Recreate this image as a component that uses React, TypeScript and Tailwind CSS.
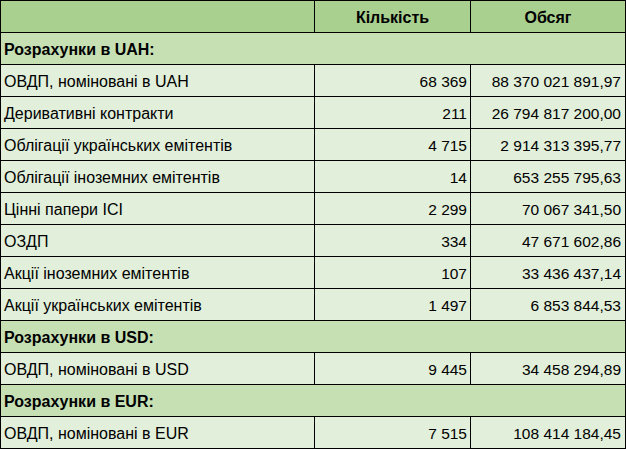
import React from "react";

type Row =
  | { kind: "section"; title: string }
  | { kind: "data"; name: string; count: string; volume: string };

const rows: Row[] = [
  { kind: "section", title: "Розрахунки в UAH:" },
  { kind: "data", name: "ОВДП, номіновані в UAH", count: "68 369", volume: "88 370 021 891,97" },
  { kind: "data", name: "Деривативні контракти", count: "211", volume: "26 794 817 200,00" },
  { kind: "data", name: "Облігації українських емітентів", count: "4 715", volume: "2 914 313 395,77" },
  { kind: "data", name: "Облігації іноземних емітентів", count: "14", volume: "653 255 795,63" },
  { kind: "data", name: "Цінні папери ІСІ", count: "2 299", volume: "70 067 341,50" },
  { kind: "data", name: "ОЗДП", count: "334", volume: "47 671 602,86" },
  { kind: "data", name: "Акції іноземних емітентів", count: "107", volume: "33 436 437,14" },
  { kind: "data", name: "Акції українських емітентів", count: "1 497", volume: "6 853 844,53" },
  { kind: "section", title: "Розрахунки в USD:" },
  { kind: "data", name: "ОВДП, номіновані в USD", count: "9 445", volume: "34 458 294,89" },
  { kind: "section", title: "Розрахунки в EUR:" },
  { kind: "data", name: "ОВДП, номіновані в EUR", count: "7 515", volume: "108 414 184,45" },
];

const cell = "h-[32px] border-r border-b border-black flex items-center pt-[2px] whitespace-nowrap";

export default function App() {
  return (
    <div className="w-[626px] text-[16px] text-black font-['Liberation_Sans',Arial,sans-serif]">
      <div className="grid grid-cols-[314px_156px_155px] border-l border-t border-black">
        {/* header */}
        <div className={`${cell} bg-[#a9d08e]`} />
        <div className={`${cell} bg-[#a9d08e] justify-center font-bold`}>Кількість</div>
        <div className={`${cell} bg-[#a9d08e] justify-center font-bold`}>Обсяг</div>

        {rows.map((r, i) =>
          r.kind === "section" ? (
            <div key={i} className={`${cell} col-span-3 bg-[#c6e0b4] px-[3px] font-bold`}>
              {r.title}
            </div>
          ) : (
            <React.Fragment key={i}>
              <div className={`${cell} bg-[#e2efda] px-[3px]`}>{r.name}</div>
              <div className={`${cell} bg-[#e2efda] justify-end pr-[3px] text-[15.5px]`}>{r.count}</div>
              <div className={`${cell} bg-[#e2efda] justify-end pr-[4px] text-[15.5px]`}>{r.volume}</div>
            </React.Fragment>
          )
        )}
      </div>
    </div>
  );
}
